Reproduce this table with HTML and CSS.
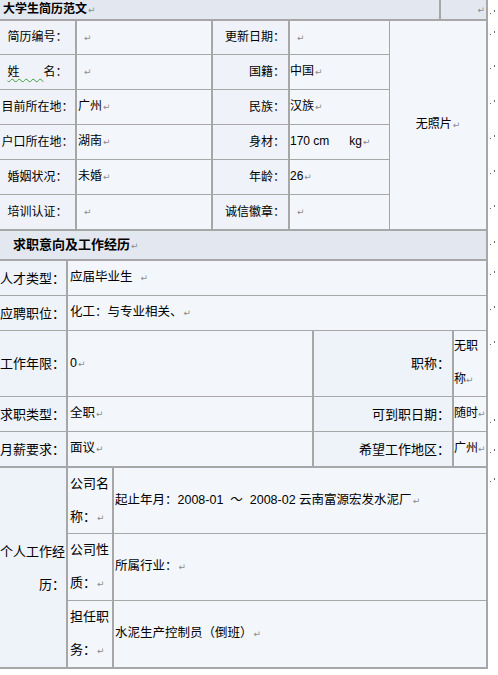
FILE: index.html
```html
<!DOCTYPE html>
<html lang="zh-CN">
<head>
<meta charset="utf-8">
<title>大学生简历范文</title>
<link rel="stylesheet" href="styles.css">
</head>
<body>
<div class="doc">
  <div class="head1">
    <div class="hd hd-main">大学生简历范文<span class="pm">↵</span></div>
    <div class="hd hd-side"><span class="pm">↵</span></div>
    <div class="eor"><i class="mk"></i></div>
  </div>

  <div class="sec1">
    <div class="c s1c1"><div class="t">简历编号：</div></div>
    <div class="c s1c2 empty"><div class="t"><span class="pm">↵</span></div></div>
    <div class="c s1c3"><div class="t">更新日期：</div></div>
    <div class="c s1c4 empty"><div class="t"><span class="pm">↵</span></div></div>
    <div class="c photo"><div class="t">无照片<span class="pm">↵</span></div></div>
    <div class="eor"><i class="mk"></i></div>

    <div class="c s1c1"><div class="t"><span class="spell">姓　　</span>名：</div></div>
    <div class="c s1c2 empty"><div class="t"><span class="pm">↵</span></div></div>
    <div class="c s1c3"><div class="t">国籍：</div></div>
    <div class="c s1c4"><div class="t">中国<span class="pm">↵</span></div></div>
    <div class="eor"><i class="mk"></i></div>

    <div class="c s1c1"><div class="t">目前所在地：</div></div>
    <div class="c s1c2"><div class="t">广州<span class="pm">↵</span></div></div>
    <div class="c s1c3"><div class="t">民族：</div></div>
    <div class="c s1c4"><div class="t">汉族<span class="pm">↵</span></div></div>
    <div class="eor"><i class="mk"></i></div>

    <div class="c s1c1"><div class="t">户口所在地：</div></div>
    <div class="c s1c2"><div class="t">湖南<span class="pm">↵</span></div></div>
    <div class="c s1c3"><div class="t">身材：</div></div>
    <div class="c s1c4"><div class="t"><span class="pre">170 cm      kg</span><span class="pm">↵</span></div></div>
    <div class="eor"><i class="mk"></i></div>

    <div class="c s1c1"><div class="t">婚姻状况：</div></div>
    <div class="c s1c2"><div class="t">未婚<span class="pm">↵</span></div></div>
    <div class="c s1c3"><div class="t">年龄：</div></div>
    <div class="c s1c4"><div class="t">26<span class="pm">↵</span></div></div>
    <div class="eor"><i class="mk"></i></div>

    <div class="c s1c1 last"><div class="t">培训认证：</div></div>
    <div class="c s1c2 empty last"><div class="t"><span class="pm">↵</span></div></div>
    <div class="c s1c3 last"><div class="t">诚信徽章：</div></div>
    <div class="c s1c4 empty last"><div class="t"><span class="pm">↵</span></div></div>
    <div class="eor"><i class="mk"></i></div>
  </div>

  <div class="head2">
    <div class="hd hd-wide">求职意向及工作经历<span class="pm">↵</span></div>
    <div class="eor"><i class="mk"></i></div>
  </div>

  <div class="sec2">
    <div class="c lab s2c1"><div class="t">人才类型：</div></div>
    <div class="c val s2wide"><div class="t">应届毕业生 &nbsp;<span class="pm">↵</span></div></div>
    <div class="eor eor2"><i class="mk"></i></div>

    <div class="c lab s2c1"><div class="t">应聘职位：</div></div>
    <div class="c val s2wide"><div class="t">化工：与专业相关、<span class="pm">↵</span></div></div>
    <div class="eor eor2"><i class="mk"></i></div>

    <div class="c lab s2c1"><div class="t">工作年限：</div></div>
    <div class="c val s2c2"><div class="t">0<span class="pm">↵</span></div></div>
    <div class="c lab s2c3"><div class="t">职称：</div></div>
    <div class="c val s2c4"><div class="t">无职称<span class="pm">↵</span></div></div>
    <div class="eor eor2"><i class="mk"></i></div>

    <div class="c lab s2c1"><div class="t">求职类型：</div></div>
    <div class="c val s2c2"><div class="t">全职<span class="pm">↵</span></div></div>
    <div class="c lab s2c3"><div class="t">可到职日期：</div></div>
    <div class="c val s2c4"><div class="t">随时<span class="pm">↵</span></div></div>
    <div class="eor eor2 eor-late"><i class="mk"></i></div>

    <div class="c lab s2c1 last"><div class="t">月薪要求：</div></div>
    <div class="c val s2c2 last"><div class="t">面议<span class="pm">↵</span></div></div>
    <div class="c lab s2c3 last"><div class="t">希望工作地区：</div></div>
    <div class="c val s2c4 last"><div class="t">广州<span class="pm">↵</span></div></div>
    <div class="eor eor2 eor-mid"><i class="mk"></i></div>
  </div>

  <div class="sec3">
    <div class="c lab s3c1 last"><div class="t">个人工作经历：</div></div>

    <div class="c sub s3c2"><div class="t">公司名称：<span class="pm">↵</span></div></div>
    <div class="c val s3c3"><div class="t">起止年月：2008-01 &nbsp;～ &nbsp;2008-02 云南富源宏发水泥厂<span class="pm">↵</span></div></div>
    <div class="eor eor3"><i class="mk"></i></div>

    <div class="c sub s3c2"><div class="t">公司性质：<span class="pm">↵</span></div></div>
    <div class="c val s3c3"><div class="t">所属行业：<span class="pm">↵</span></div></div>
    <div class="eor eor3"></div>

    <div class="c sub s3c2 last"><div class="t">担任职务：<span class="pm">↵</span></div></div>
    <div class="c val s3c3 last"><div class="t">水泥生产控制员（倒班）<span class="pm">↵</span></div></div>
    <div class="eor eor3"></div>
  </div>
</div>
</body>
</html>
```

FILE: styles.css
```css
html, body {
  margin: 0;
  padding: 0;
  background: #ffffff;
}

body {
  font-family: "Liberation Sans", "Noto Sans CJK SC", sans-serif;
  color: #000;
  font-size: 12px;
}

.doc {
  width: 498px;
}

/* paragraph mark */
.pm {
  font-family: "DejaVu Sans", sans-serif;
  font-size: 9px;
  color: #8c8c8c;
  margin-left: 1px;
}

.pre {
  white-space: pre;
}

.spell {
  text-decoration: underline wavy #3c9a3c;
  text-decoration-thickness: 1px;
  text-underline-offset: 2px;
}

/* end-of-row marker */
.eor {
  box-sizing: border-box;
  padding-top: 10px;
  padding-left: 2px;
}

.eor-late {
  padding-top: 22px;
}

.eor-mid {
  padding-top: 17px;
}

.mk {
  display: block;
  position: relative;
  width: 6px;
  height: 4px;
}

.mk::before,
.mk::after {
  content: "";
  position: absolute;
  background: #6a6a6a;
}

.mk::before {
  left: 0;
  top: 3px;
  width: 1px;
  height: 1px;
}

.mk::after {
  left: 4px;
  top: 0;
  width: 1px;
  height: 2px;
}

/* generic cell */
.c {
  box-sizing: border-box;
  display: flex;
  align-items: center;
  background: #f3f6fa;
  border-right: 2px solid #a7a7a7;
  border-bottom: 1px solid #a7a7a7;
  overflow: hidden;
}

.t {
  width: 100%;
  line-height: 33px;
}

.c.last {
  border-bottom-width: 2px;
}

/* headers */
.head1 {
  display: flex;
  height: 21px;
}

.hd {
  box-sizing: border-box;
  background: #e3e8f0;
  border-bottom: 2px solid #a7a7a7;
  border-right: 2px solid #a7a7a7;
  font-weight: bold;
}

.hd .pm {
  font-weight: normal;
}

.hd-main {
  width: 441px;
  padding-left: 3px;
  font-size: 12px;
  line-height: 19px;
}

.hd-side {
  width: 47px;
  text-align: right;
  line-height: 19px;
  padding-right: 1px;
}

.head1 .eor,
.head2 .eor {
  width: 10px;
}

.head2 {
  display: flex;
  height: 30px;
}

.hd-wide {
  width: 488px;
  padding-left: 13px;
  font-size: 13px;
  line-height: 28px;
}

/* section 1 */
.sec1 {
  display: grid;
  grid-template-columns: 77px 136px 77px 100px 98px 10px;
  grid-template-rows: 34px 35px 35px 35px 35px 36px;
}

.s1c1 {
  grid-column: 1;
  text-align: center;
  background: #eff3f9;
}

.s1c2 {
  grid-column: 2;
  padding-left: 1px;
}

.s1c3 {
  grid-column: 3;
  text-align: right;
  padding-right: 3px;
  background: #eff3f9;
}

.s1c4 {
  grid-column: 4;
  border-right-width: 1px;
}

.sec1 .eor {
  grid-column: 6;
}

.empty {
  padding-left: 6px;
}

.photo {
  grid-column: 5;
  grid-row: 1 / span 6;
  text-align: center;
  border-bottom-width: 2px;
}

/* section 2 */
.sec2 {
  display: grid;
  grid-template-columns: 68px 246px 140px 34px 10px;
  grid-template-rows: 35px 35px 66px 35px 36px;
  font-size: 13px;
}

.lab {
  background: #eef2f9;
  text-align: right;
}

.val {
  font-size: 12.5px;
}

.s2c1 {
  grid-column: 1;
  padding-right: 1px;
}

.s2wide {
  grid-column: 2 / span 3;
  padding-left: 2px;
}

.s2c2 {
  grid-column: 2;
  padding-left: 2px;
}

.s2c3 {
  grid-column: 3;
  padding-right: 2px;
}

.s2c4 {
  grid-column: 4;
  font-size: 12px;
  padding: 0;
}

.s2c4 .pm {
  margin-left: 0;
}

.eor2 {
  grid-column: 5;
}

/* section 3 */
.sec3 {
  display: grid;
  grid-template-columns: 68px 46px 374px 10px;
  grid-template-rows: 66px 67px 68px;
  font-size: 13px;
}

.s3c1 {
  grid-column: 1;
  grid-row: 1 / span 3;
  padding-right: 1px;
}

.sub {
  text-align: left;
}

.s3c2 {
  grid-column: 2;
  padding-left: 2px;
  padding-right: 1px;
}

.s3c3 {
  grid-column: 3;
  padding-left: 1px;
}

.eor3 {
  grid-column: 4;
}
```
